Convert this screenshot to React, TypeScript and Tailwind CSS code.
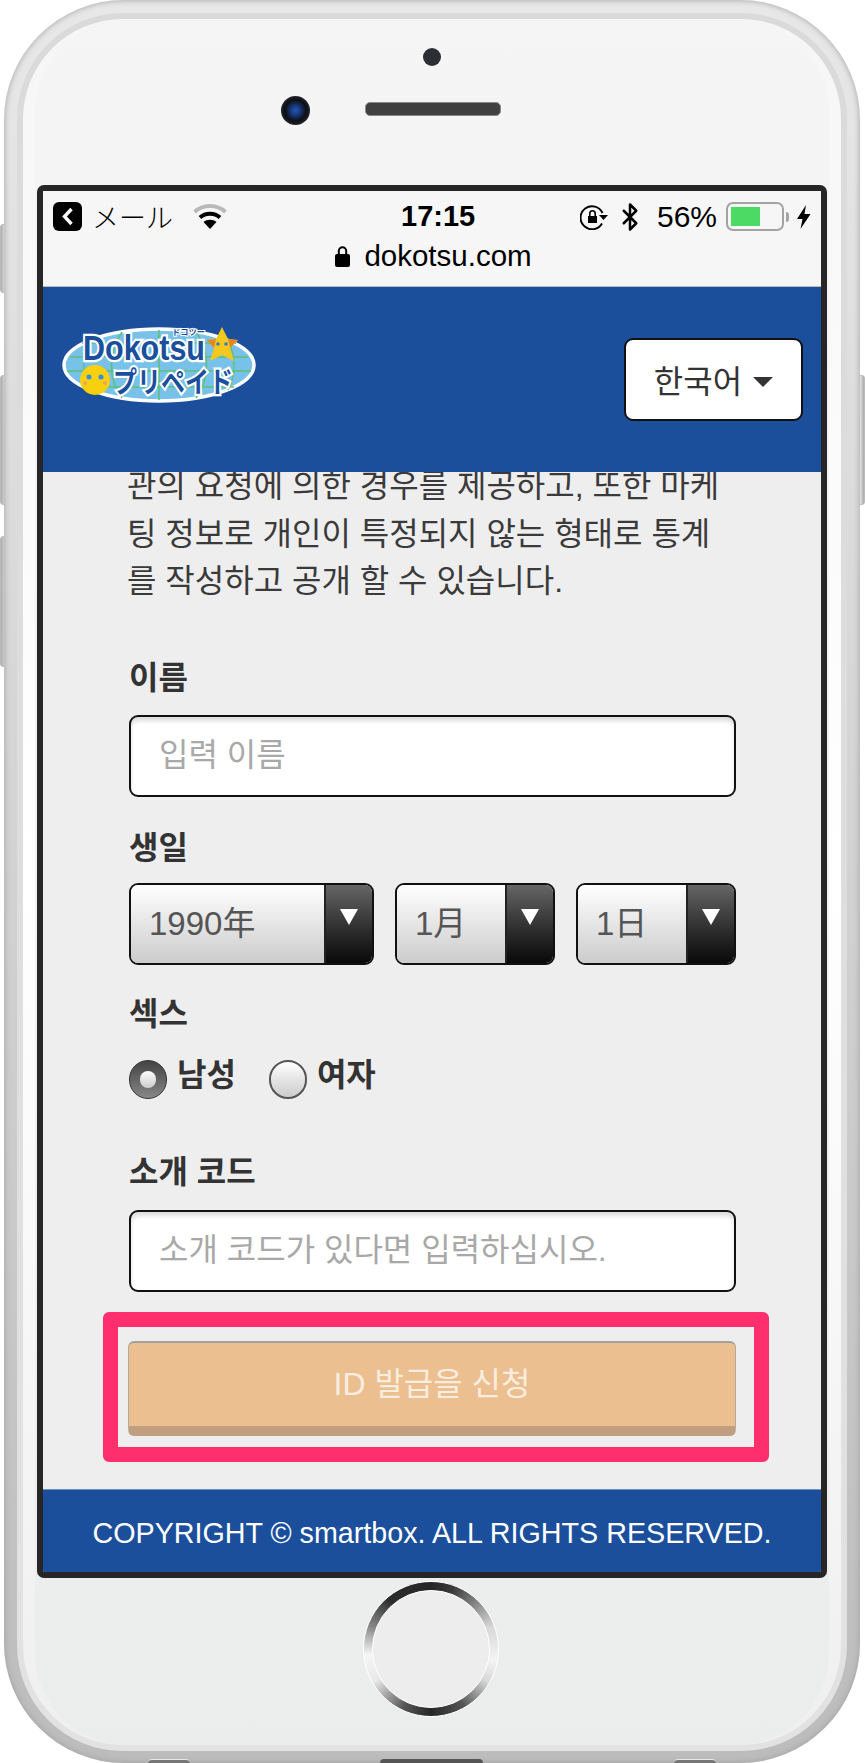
import React from 'react';
import { Bluetooth } from 'lucide-react';

const Logo: React.FC = () => (
    <svg width="194" height="76" viewBox="0 0 194 76" className="block overflow-visible">
        <ellipse cx="97" cy="38" rx="95" ry="36" fill="#78c2ea" stroke="#ffffff" strokeWidth="3.5" />
        <g stroke="#5cc07a" strokeWidth="1.5" fill="none">
            <path d="M8 30 H186 M5 44 H189 M20 16 H174 M22 60 H172" />
            <path d="M97 3 V73 M60 5 C46 25 46 52 60 71 M134 5 C148 25 148 52 134 71 M28 13 C20 30 20 48 28 63 M166 13 C174 30 174 48 166 63" />
        </g>
        <text x="21" y="33" fontFamily="Liberation Sans, sans-serif" fontWeight="700" fontSize="35" textLength="122" lengthAdjust="spacingAndGlyphs" fill="#1b4f9c" stroke="#ffffff" strokeWidth="4.5" paintOrder="stroke">Dokotsu</text>
        <text x="51" y="66" fontFamily="Noto Sans CJK JP, sans-serif" fontWeight="700" fontSize="29" textLength="120" lengthAdjust="spacingAndGlyphs" fill="#1b4f9c" stroke="#ffffff" strokeWidth="4.5" paintOrder="stroke">プリペイド</text>
        <text x="110" y="8" fontFamily="Noto Sans CJK JP, sans-serif" fontWeight="700" fontSize="8" textLength="33" lengthAdjust="spacingAndGlyphs" fill="#1b4f9c" stroke="#ffffff" strokeWidth="2" paintOrder="stroke">ドコツー</text>
        <polygon points="160,0 166,12 176,13 168,21 172,34 160,28 148,34 152,21 145,13 154,12" fill="#f5c81e" />
        <polygon points="145,13 154,12 152,21" fill="#e8861c" />
        <polygon points="176,13 166,12 168,21" fill="#e8861c" />
        <circle cx="156" cy="17" r="1.8" fill="#2f7fd0" />
        <circle cx="164" cy="17" r="1.8" fill="#2f7fd0" />
        <circle cx="33" cy="53" r="15" fill="#f8d010" />
        <circle cx="27" cy="50" r="2.5" fill="#2f8fe0" />
        <circle cx="39" cy="50" r="2.5" fill="#2f8fe0" />
        <circle cx="23" cy="56" r="2" fill="#f0a060" />
        <circle cx="43" cy="56" r="2" fill="#f0a060" />
    </svg>
);

const WifiIcon: React.FC = () => (
    <svg width="34" height="25" viewBox="0 0 34 25">
        <path d="M1.5 8 C10 0 24 0 32.5 8" fill="none" stroke="#b9b9b9" strokeWidth="4" />
        <path d="M7 13.5 C12.5 8.5 21.5 8.5 27 13.5" fill="none" stroke="#000" strokeWidth="4" />
        <path d="M17 25 L10.5 18 C14 15 20 15 23.5 18 Z" fill="#000" />
    </svg>
);

const RotationLock: React.FC = () => (
    <svg width="28" height="26" viewBox="0 0 28 26">
        <path d="M22.5 9 A11.5 11.5 0 1 0 22 19.5" fill="none" stroke="#000" strokeWidth="2" />
        <path d="M19 11 H28 L23.5 16 Z" fill="#000" />
        <path d="M8 12 H17 V19 H8 Z" fill="#000" />
        <path d="M9.8 12 V9.5 A2.7 2.7 0 0 1 15.2 9.5 V12" fill="none" stroke="#000" strokeWidth="1.6" />
    </svg>
);

const SelectBox: React.FC<{ label: string; width: string; textPad: string }> = ({ label, width, textPad }) => (
    <div className={`${width} h-[82px] flex border-2 border-[#111] rounded-[9px] overflow-hidden`}>
        <div className={`flex-1 flex items-center ${textPad} bg-gradient-to-b from-white to-[#cccccc] text-[#555555] text-[33px] [font-family:'Liberation_Sans','Noto_Sans_CJK_JP',sans-serif]`}>
            {label}
        </div>
        <div className="w-[48px] flex justify-center pt-[24px] border-l-2 border-l-[#222] bg-gradient-to-b from-[#666666] to-[#0a0a0a]">
            <svg width="18" height="16" viewBox="0 0 18 16"><path d="M0 0 H18 L9 16 Z" fill="#fff" /></svg>
        </div>
    </div>
);

const TextField: React.FC<{ placeholder: string }> = ({ placeholder }) => (
    <input
        readOnly
        placeholder={placeholder}
        className="block w-full h-[82px] pl-[28px] pr-3 bg-white border-2 border-[#111] rounded-[9px] shadow-[inset_0_4px_4px_#dddddd] text-[32px] placeholder:text-[#a8a8a8] outline-none"
    />
);

export default function App() {
    return (
        <div className="relative w-[865px] h-[1763px] overflow-hidden bg-white [font-family:'Liberation_Sans','Noto_Sans_CJK_KR',sans-serif] text-[#333333]">
            {/* side buttons */}
            <div className="absolute left-0 top-[224px] w-[6px] h-[69px] rounded-l-[3px] bg-gradient-to-r from-[#aaaaaa] to-[#e4e4e4] border border-[#bbbbbb]" />
            <div className="absolute left-0 top-[375px] w-[7px] h-[130px] rounded-l-[3px] bg-gradient-to-r from-[#aaaaaa] to-[#e4e4e4] border border-[#bbbbbb]" />
            <div className="absolute left-0 top-[536px] w-[7px] h-[131px] rounded-l-[3px] bg-gradient-to-r from-[#aaaaaa] to-[#e4e4e4] border border-[#bbbbbb]" />
            <div className="absolute right-0 top-[375px] w-[6px] h-[130px] rounded-r-[3px] bg-gradient-to-l from-[#aaaaaa] to-[#e4e4e4] border border-[#bbbbbb]" />

            {/* phone body */}
            <div className="relative ml-[4px] w-[856px] h-[1763px] rounded-[120px] px-[13px] pt-[13px] pb-[12px] bg-gradient-to-b from-[#e8e8e8] to-[#bcbcbc] shadow-[inset_0_0_6px_#a0a0a0]">
                <div className="h-full rounded-[106px] p-[6px] bg-gradient-to-b from-[#dadada] to-[#e2e2e2]">
                    <div className="h-full rounded-[100px] px-[12px] bg-gradient-to-b from-[#f6f6f6] via-[#ffffff] to-[#efefef]">
                        <div className="h-full rounded-[92px] bg-gradient-to-b from-[#f5f5f5] to-[#ebecec]">
                            {/* earpiece area */}
                            <div className="h-[166px] pt-[29px]">
                                <div className="ml-[388px] w-[18px] h-[18px] rounded-full bg-[#2b2e33]" />
                                <div className="flex items-start mt-[30px] pl-[246px]">
                                    <div className="w-[29px] h-[29px] rounded-full bg-[radial-gradient(circle,#2458b8_0%,#1a3a80_22%,#0d0f14_52%,#45464a_100%)]" />
                                    <div className="ml-[55px] mt-[6px] w-[136px] h-[14px] rounded-[5px] bg-[#404040] border border-[#8a8a8a]" />
                                </div>
                            </div>

                            {/* screen */}
                            <div className="mx-[2px] h-[1393px] flex flex-col border-[6px] border-[#262626] rounded-[7px] overflow-hidden">
                                <div className="h-[96px] bg-[#f6f6f6] border-b border-b-[#bbbbbb] text-black">
                                    <div className="h-[48px] flex items-center">
                                        <div className="w-[358px] flex items-center pl-[10px] pt-[3px]">
                                            <div className="w-[29px] h-[29px] rounded-[6px] bg-black flex items-center justify-center">
                                                <svg width="13" height="19" viewBox="0 0 13 19"><path d="M10.5 2 L3.5 9.5 L10.5 17" fill="none" stroke="#fff" strokeWidth="3.4" /></svg>
                                            </div>
                                            <span className="ml-[10px] w-[80px] text-[27px] leading-none whitespace-nowrap [font-family:'Noto_Sans_CJK_JP',sans-serif] font-light">メール</span>
                                            <span className="ml-[21px]"><WifiIcon /></span>
                                        </div>
                                        <div className="w-[74px] text-[29px] font-bold leading-none text-center whitespace-nowrap pt-[2px]">17:15</div>
                                        <div className="flex-1 flex items-center justify-end pr-[10px] pt-[3px]">
                                            <RotationLock />
                                            <Bluetooth size={30} strokeWidth={2} className="ml-[7px] text-black" />
                                            <span className="ml-[12px] text-[30px] leading-none">56%</span>
                                            <div className="ml-[9px] w-[58px] h-[29px] rounded-[7px] border-2 border-[#a3a3a3] p-[3px]">
                                                <div className="w-[29px] h-full bg-[#4cd964]" />
                                            </div>
                                            <div className="ml-[2px] w-[3px] h-[10px] rounded-r-[3px] bg-[#a3a3a3]" />
                                            <svg className="ml-[7px]" width="15" height="24" viewBox="0 0 15 24"><path d="M10 0 L1 14 H6.5 L4.5 24 L14.5 9 H8.5 Z" fill="#000" /></svg>
                                        </div>
                                    </div>
                                    <div className="flex items-center justify-center gap-[14px] text-[29.5px] leading-none pl-[3px] pt-[2px]">
                                        <svg width="15" height="22" viewBox="0 0 15 22">
                                            <path d="M3.8 9 V6 A3.7 3.7 0 0 1 11.2 6 V9" fill="none" stroke="#000" strokeWidth="2" />
                                            <rect x="0" y="9" width="15" height="13" rx="2" fill="#000" />
                                        </svg>
                                        <span>dokotsu.com</span>
                                    </div>
                                </div>

                                {/* site header */}
                                <div className="h-[185px] shrink-0 bg-[#1b4f9c] flex justify-between pl-[19px] pr-[18px]">
                                    <div className="mt-[40px]"><Logo /></div>
                                    <div className="mt-[51px] w-[179px] h-[83px] pt-[4px] bg-white border-2 border-[#111] rounded-[9px] flex items-center justify-center gap-[11px] text-[32px] text-[#333333]">
                                        <span>한국어</span>
                                        <svg width="20" height="10" viewBox="0 0 20 10"><path d="M0 0 H20 L10 10 Z" fill="#333" /></svg>
                                    </div>
                                </div>

                                {/* form */}
                                <div className="h-[1017px] shrink-0 overflow-hidden bg-[#eeeeee] pl-[86px] pr-[85px]">
                                    <p className="-mt-[9px] -ml-[2px] text-[32px] leading-[47.5px] whitespace-nowrap text-[#3a3a3a]">
                                        관의 요청에 의한 경우를 제공하고, 또한 마케<br />
                                        팅 정보로 개인이 특정되지 않는 형태로 통계<br />
                                        를 작성하고 공개 할 수 있습니다.
                                    </p>
                                    <div className="mt-[52px] h-[40px] leading-[40px] text-[32px] font-bold">이름</div>
                                    <div className="mt-[17px]"><TextField placeholder="입력 이름" /></div>
                                    <div className="mt-[31px] h-[40px] leading-[40px] text-[32px] font-bold">생일</div>
                                    <div className="mt-[15px] flex justify-between">
                                        <SelectBox label="1990年" width="w-[245px]" textPad="pl-[18px]" />
                                        <SelectBox label="1月" width="w-[160px]" textPad="pl-[18px]" />
                                        <SelectBox label="1日" width="w-[160px]" textPad="pl-[18px]" />
                                    </div>
                                    <div className="mt-[29px] h-[40px] leading-[40px] text-[32px] font-bold">섹스</div>
                                    <div className="mt-[26px] h-[39px] flex items-start text-[32px] font-bold leading-[31px]">
                                        <div className="w-[38px] h-[39px] rounded-full bg-gradient-to-b from-[#444444] to-[#888888] flex items-center justify-center border border-[#333333]">
                                            <div className="w-[16px] h-[17px] rounded-full bg-gradient-to-b from-white to-[#cccccc]" />
                                        </div>
                                        <span className="ml-[10px]">남성</span>
                                        <div className="ml-[33px] w-[38px] h-[39px] rounded-full bg-gradient-to-b from-white to-[#cccccc] border-2 border-[#555555]" />
                                        <span className="ml-[10px]">여자</span>
                                    </div>
                                    <div className="mt-[53px] h-[40px] leading-[40px] text-[32px] font-bold">소개 코드</div>
                                    <div className="mt-[18px]"><TextField placeholder="소개 코드가 있다면 입력하십시오." /></div>
                                    <div className="mt-[20px] -ml-[26px] w-[666px] h-[150px] border-[15px] border-[#ff2e6c] rounded-[6px] pl-[10px] pt-[14px]">
                                        <button className="block w-[608px] h-[95px] rounded-[6px] bg-[#ebbf8f] border-t-2 border-x border-t-[#a5a29c] border-x-[#b5ab9c] border-b-[10px] border-b-[#bf9f80] text-[32px] text-[#f8eddf]">
                                            ID 발급을 신청
                                        </button>
                                    </div>
                                </div>

                                {/* footer */}
                                <div className="flex-1 pt-[5px] bg-[#1b4f9c] text-white text-[28.7px] flex items-center justify-center whitespace-nowrap border-t border-t-[#6f8fbd]">
                                    COPYRIGHT © smartbox. ALL RIGHTS RESERVED.
                                </div>
                            </div>

                            {/* home button */}
                            <div className="mt-[3px] ml-[328px] w-[136px] h-[136px] rounded-full p-[8px] border border-white bg-[conic-gradient(#262626_0deg,#3a3a3a_20deg,#d8d8d8_70deg,#f4f4f4_100deg,#d8d8d8_120deg,#555555_150deg,#262626_180deg,#555555_205deg,#e8e8e8_240deg,#f6f6f6_265deg,#8a8a8a_290deg,#2c2c2c_320deg,#262626_360deg)]">
                                <div className="w-full h-full rounded-full bg-[#ecedec] border border-white" />
                            </div>
                        </div>
                    </div>
                </div>
                {/* bottom edge openings */}
                <div className="absolute bottom-0 left-[144px] w-[42px] h-[4px] rounded-t-[6px] bg-[#777777] border-t border-t-[#e8e8e8]" />
                <div className="absolute bottom-0 left-[376px] w-[103px] h-[4px] rounded-t-[6px] bg-[#555555]" />
                <div className="absolute bottom-0 left-[670px] w-[42px] h-[4px] rounded-t-[6px] bg-[#777777] border-t border-t-[#e8e8e8]" />
            </div>
        </div>
    );
}
